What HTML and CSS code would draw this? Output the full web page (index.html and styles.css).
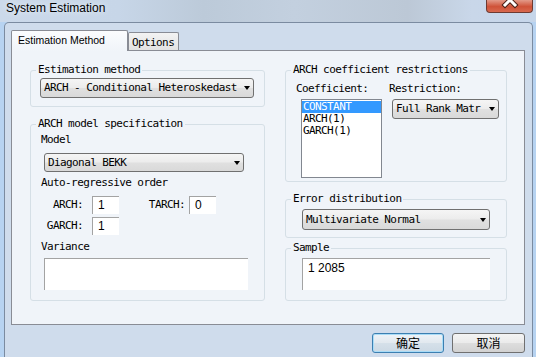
FILE: index.html
```html
<!DOCTYPE html>
<html lang="en">
<head>
	<meta charset="UTF-8">
	<title>System Estimation</title>
	<link rel="stylesheet" href="styles.css">
</head>
<body>
	<div class="window">
		<div class="titlebar">
			<span class="title">System Estimation</span>
			<div class="close">
				<svg width="47" height="13" viewBox="0 0 47 13">
					<path d="M19 -4 L29 6 M29 -4 L19 6" stroke="#4a2018" stroke-width="5" stroke-linecap="square" fill="none"/>
					<path d="M19 -4 L29 6 M29 -4 L19 6" stroke="#fff" stroke-width="3" stroke-linecap="square" fill="none"/>
				</svg>
			</div>
		</div>

		<div class="client">
			<div class="tabs">
				<div class="tab tab-active">Estimation Method</div>
				<div class="tab tab-plain">Options</div>
			</div>

			<div class="panel">
				<!-- left column -->
				<div class="col col-left">
					<div class="group g-method">
						<span class="legend">Estimation method</span>
						<div class="select sel-method">
							<span>ARCH - Conditional Heteroskedast</span><i class="arrow"></i>
						</div>
					</div>

					<div class="group g-spec">
						<span class="legend">ARCH model specification</span>
						<div class="label">Model</div>
						<div class="select sel-model">
							<span>Diagonal BEKK</span><i class="arrow"></i>
						</div>
						<div class="label label-order">Auto-regressive order</div>
						<div class="order-row">
							<span class="order-name">ARCH:</span>
							<div class="num">1</div>
							<span class="order-name order-name-wide">TARCH:</span>
							<div class="num">0</div>
						</div>
						<div class="order-row order-row-2">
							<span class="order-name">GARCH:</span>
							<div class="num">1</div>
						</div>
						<div class="label label-variance">Variance</div>
						<div class="textbox variance"></div>
					</div>
				</div>

				<!-- right column -->
				<div class="col col-right">
					<div class="group g-coef">
						<span class="legend">ARCH coefficient restrictions</span>
						<div class="coef-wrap">
							<div class="coef-col">
								<div class="label">Coefficient:</div>
								<ul class="listbox">
									<li class="selected">CONSTANT</li>
									<li>ARCH(1)</li>
									<li>GARCH(1)</li>
								</ul>
							</div>
							<div class="restrict-col">
								<div class="label">Restriction:</div>
								<div class="select sel-restrict">
									<span>Full Rank Matr</span><i class="arrow"></i>
								</div>
							</div>
						</div>
					</div>

					<div class="group g-error">
						<span class="legend">Error distribution</span>
						<div class="select sel-error">
							<span>Multivariate Normal</span><i class="arrow"></i>
						</div>
					</div>

					<div class="group g-sample">
						<span class="legend">Sample</span>
						<div class="textbox sample">1 2085</div>
					</div>
				</div>
			</div>

			<div class="actions">
				<button class="btn btn-default" type="button">确定</button>
				<button class="btn btn-cancel" type="button">取消</button>
			</div>
		</div>
	</div>
</body>
</html>
```

FILE: styles.css
```css
* {
	box-sizing: border-box;
}

body {
	margin: 0;
	width: 536px;
	height: 357px;
	overflow: hidden;
	font-family: "DejaVu Sans Mono", monospace;
	font-size: 11px;
	letter-spacing: -0.6px;
	color: #000;
}

.window {
	display: flex;
	flex-direction: column;
	height: 357px;
	background: #b7d3f1;
}

.titlebar {
	position: relative;
	height: 22px;
	padding: 1px 0 0 6px;
	background: linear-gradient(90deg, #cbd9ea 0%, #c7d6e8 22%, #bccad9 38%, #c3d0df 55%, #bcc8d6 76%, #c9d7e9 88%, #c6d6ea 100%);
}

.title {
	font-family: "Liberation Sans", sans-serif;
	font-size: 12px;
	line-height: 14px;
	letter-spacing: 0;
	text-shadow: 0 0 6px #eef4fb;
}

.close {
	position: absolute;
	top: 0;
	right: 3px;
	width: 47px;
	height: 13px;
	border: 1px solid #6e3a31;
	border-top: none;
	border-radius: 0 0 4px 4px;
	background: linear-gradient(#e39a89, #cf5238 55%, #d8694f);
	overflow: hidden;
}

.close svg {
	display: block;
	margin: -1px 0 0 -1px;
}

.client {
	flex: 1;
	width: 529px;
	margin-left: 4px;
	padding: 7px 7px 0 6px;
	background: #cfdcec;
	border: 1px solid #7b8ba0;
	border-bottom: none;
	border-radius: 5px 5px 0 0;
}

/* tabs */
.tabs {
	position: relative;
	z-index: 1;
	display: flex;
	align-items: flex-end;
	height: 20px;
}

.tab {
	border: 1px solid #898c95;
	border-bottom: none;
	border-radius: 2px 2px 0 0;
}

.tab-active {
	width: 117px;
	height: 21px;
	margin-bottom: -1px;
	padding: 3px 0 0 6px;
	background: linear-gradient(#fbfcfe, #f0f4f9);
	font-family: "Liberation Sans", sans-serif;
	font-size: 10.5px;
	line-height: 12px;
	letter-spacing: 0;
}

.tab-plain {
	width: 51px;
	height: 18px;
	padding: 4px 0 0 3px;
	line-height: 12px;
	background: linear-gradient(#f3f3f3, #e2e2e2);
}

.panel {
	display: flex;
	gap: 20px;
	height: 275px;
	padding: 19px 0 0 18px;
	background: #f0f4f9;
	border: 1px solid #898c95;
}

.col {
	display: flex;
	flex-direction: column;
}

.col-left {
	width: 235px;
}

.col-right {
	width: 222px;
}

/* group boxes */
.group {
	position: relative;
	border: 1px solid #d5dfe6;
	border-radius: 3px;
}

.legend {
	position: absolute;
	top: -7px;
	left: 5px;
	padding: 0 2px;
	line-height: 12px;
	background: #f0f4f9;
	white-space: nowrap;
}

.label {
	line-height: 14px;
	white-space: nowrap;
}

.g-method {
	height: 37px;
	padding: 7px 0 0 9px;
}

.g-spec {
	height: 177px;
	margin-top: 17px;
	padding: 8px 0 0 10px;
}

.g-coef {
	height: 112px;
	padding: 11px 0 0 10px;
}

.g-error {
	height: 39px;
	margin-top: 17px;
	padding: 9px 0 0 16px;
}

.g-sample {
	height: 53px;
	margin-top: 10px;
	padding: 9px 0 0 16px;
}

/* combo boxes */
.select {
	display: flex;
	align-items: center;
	justify-content: space-between;
	padding: 0 3px 0 3px;
	line-height: 12px;
	white-space: nowrap;
	border: 1px solid #707070;
	border-radius: 3px;
	background: linear-gradient(#f5f5f5, #ececec 48%, #e0e0e0 52%, #d9d9d9);
}

.arrow {
	flex: none;
	width: 0;
	height: 0;
	border-left: 3.5px solid transparent;
	border-right: 3.5px solid transparent;
	border-top: 4px solid #000;
}

.sel-method {
	width: 214px;
	height: 20px;
}

.sel-model {
	width: 200px;
	height: 19px;
	margin: 6px 0 0 3px;
}

.sel-restrict {
	width: 107px;
	height: 20px;
	margin: 3px 0 0 3px;
}

.sel-error {
	width: 188px;
	height: 21px;
}

/* order fields */
.label-order {
	margin-top: 4px;
}

.order-row {
	display: flex;
	align-items: center;
	margin-top: 6px;
}

.order-row-2 {
	margin-top: 3px;
}

.order-name {
	width: 42px;
	margin-right: 9px;
	text-align: right;
	line-height: 12px;
}

.order-name-wide {
	width: 66px;
	margin-right: 4px;
}

.num {
	width: 27px;
	height: 18px;
	padding-left: 5px;
	font-family: "Liberation Sans", sans-serif;
	font-size: 12px;
	line-height: 17px;
	letter-spacing: 0;
	background: #fff;
	border-top: 1px solid #a3a3a3;
	border-left: 1px solid #a3a3a3;
}

.label-variance {
	margin-top: 5px;
}

.textbox {
	height: 32px;
	background: #fff;
	border-top: 1px solid #a3a3a3;
	border-left: 1px solid #a3a3a3;
}

.variance {
	width: 204px;
	margin: 4px 0 0 3px;
}

.sample {
	width: 188px;
	padding: 2px 0 0 5px;
	font-family: "Liberation Sans", sans-serif;
	font-size: 12px;
	line-height: 14px;
	letter-spacing: 0;
}

/* coefficient list */
.coef-wrap {
	display: flex;
}

.coef-col {
	width: 93px;
}

.listbox {
	width: 81px;
	height: 79px;
	margin: 3px 0 0 5px;
	padding: 1px 0 0;
	list-style: none;
	background: #fff;
	border: 1px solid #828790;
}

.listbox li {
	padding-left: 1px;
	line-height: 12px;
}

.listbox .selected {
	color: #fff;
	background: #3399ff;
}

/* buttons */
.actions {
	display: flex;
	justify-content: flex-end;
	gap: 8px;
	margin-top: 8px;
}

.btn {
	height: 20px;
	padding: 0;
	font-family: "Noto Sans CJK SC", sans-serif;
	font-size: 12px;
	line-height: 16px;
	letter-spacing: 0;
	color: #000;
	border: 1px solid #707070;
	border-radius: 3px;
	background: linear-gradient(#f4f4f4, #ebebeb 48%, #dddddd 52%, #d2d2d2);
}

.btn-default {
	width: 72px;
	border-color: #3c7fb1;
	box-shadow: inset 0 0 0 1px #a9dcf7;
	background: linear-gradient(#eef3f8, #e2e9ef 48%, #d5e0e9 52%, #ccd9e4);
}

.btn-cancel {
	width: 73px;
}
```
